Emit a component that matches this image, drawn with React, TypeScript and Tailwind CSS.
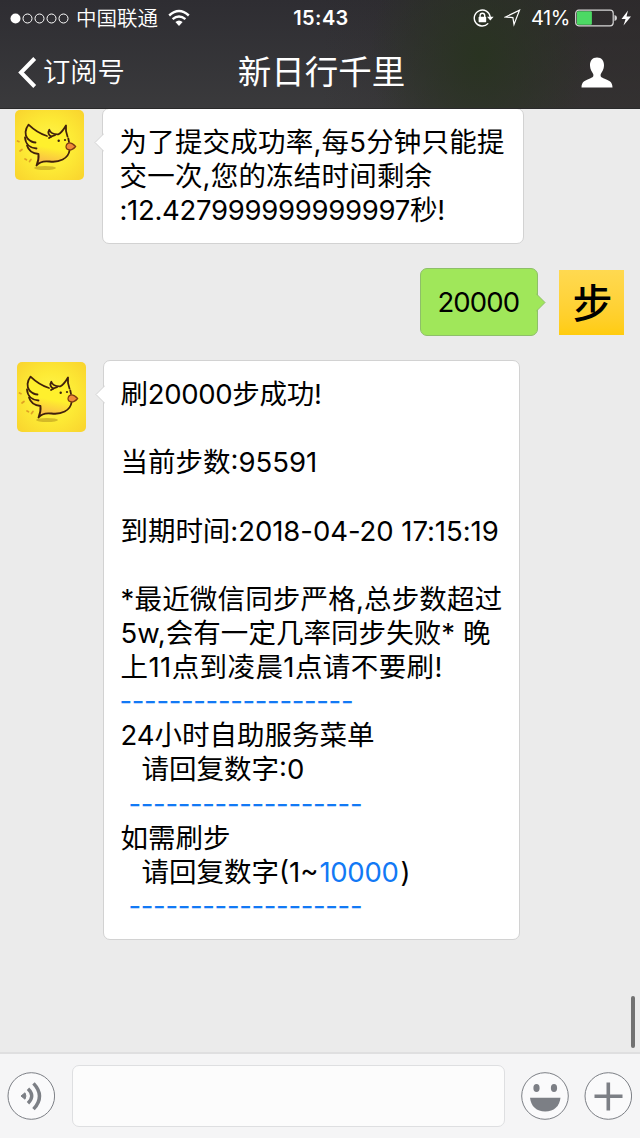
import type { ReactNode } from "react"
import clsx from "clsx"

function StatusBar() {
  return (
    <div className="flex h-9 items-center text-[20px] leading-9">
      <div className="flex w-[213px] items-center">
        <svg className="ml-2.5 h-4 w-[60px]" viewBox="0 0 60 16" fill="none" stroke="white">
          <circle cx="5.5" cy="8.5" r="5" fill="white" stroke="none" />
          <circle cx="17.5" cy="8.5" r="4.5" />
          <circle cx="29.5" cy="8.5" r="4.5" />
          <circle cx="41.5" cy="8.5" r="4.5" />
          <circle cx="53.5" cy="8.5" r="4.5" />
        </svg>
        <span className="ml-1.5 pt-px text-[20.5px] font-[350]">中国联通</span>
        <svg className="ml-2.5 h-[18px] w-[22px]" viewBox="0 0 22 18" fill="none" stroke="white" strokeWidth="2.4">
          <path d="M1.2 6.5 Q11 -2.5 20.8 6.5" />
          <path d="M4.6 10.2 Q11 4.6 17.4 10.2" />
          <path d="M11 17 L7.4 13 Q11 10 14.6 13 Z" fill="white" stroke="none" />
        </svg>
      </div>
      <div className="w-[216px] text-center font-semibold tracking-[0.4px]">15:43</div>
      <div className="flex w-[211px] items-center">
        <svg className="ml-[44px] h-[18px] w-[21px]" viewBox="0 0 21 18" fill="none" stroke="white" strokeWidth="1.4">
          <path d="M15.2 14.4 A8 8 0 1 1 17.2 8" />
          <path d="M14 7.8 H20.6 L17.3 11.6 Z" fill="white" stroke="none" />
          <rect x="5.6" y="7.8" width="7.6" height="5.4" rx="0.6" fill="white" stroke="none" />
          <path d="M7.1 8 V6.5 A2.3 2.3 0 0 1 11.7 6.5 V8" />
        </svg>
        <svg className="ml-2.5 h-[18px] w-[18px]" viewBox="0 0 18 18" fill="none" stroke="white" strokeWidth="1.2">
          <path d="M1.5 8 L15.5 1.2 L10 15.5 L8.9 8.6 Z" />
        </svg>
        <span className="ml-[9px] w-[44px] text-[20px] tracking-[-0.5px]">41%</span>
        <svg className="h-[18px] w-[58px]" viewBox="0 0 58 18">
          <rect x="0.7" y="1.2" width="37.5" height="15.6" rx="3" fill="none" stroke="#d8d8d8" strokeWidth="1.2" />
          <rect x="1.9" y="2.3" width="15" height="13.4" rx="1" fill="#4cd964" />
          <path d="M39.5 6 Q42 6.5 42 9 Q42 11.5 39.5 12 Z" fill="#d8d8d8" />
          <path d="M53 1.5 L46.5 10 H50.6 L48.5 16.5 L56 7.5 H51.5 Z" fill="white" />
        </svg>
      </div>
    </div>
  )
}

function Header() {
  return (
    <header className="h-[109px] shrink-0 border-b border-[#29292a] bg-[radial-gradient(ellipse_110px_130px_at_480px_55px,#293321_0%,#29332100_100%),linear-gradient(90deg,#29242b00_50%,#2d282680_88%),linear-gradient(180deg,#2e2d32,#3a3a3c)] text-white">
      <StatusBar />
      <div className="flex h-[72px] items-center">
        <div className="flex w-[200px] items-center">
          <svg className="ml-[18px] h-[31px] w-[19px]" viewBox="0 0 19 31" fill="none" stroke="white" strokeWidth="4">
            <path d="M16.7 1.5 L3 15.5 L16.7 29.5" />
          </svg>
          <span className="ml-1.5 pt-0.5 text-[27.3px] font-[350]">订阅号</span>
        </div>
        <h1 className="w-[243px] pt-px text-center text-[33.5px] font-normal">新日行千里</h1>
        <div className="flex w-[197px] justify-end">
          <svg className="mr-[27px] h-[31px] w-8" viewBox="0 0 32 31" fill="white">
            <path d="M16 .5 C20.7 .5 23.2 4 23 8.8 C22.9 12.5 21 15 19.8 17 C19.2 19.5 20 20.3 23 21.4 C28 23.3 31.5 24.5 31.5 30.5 H.5 C.5 24.5 4 23.3 9 21.4 C12 20.3 12.8 19.5 12.2 17 C11 15 9.1 12.5 9 8.8 C8.8 4 11.3 .5 16 .5 Z" />
          </svg>
        </div>
      </div>
    </header>
  )
}

function BirdAvatar({ className }: { className?: string }) {
  return (
    <svg className={clsx("h-[70px] w-[69px] shrink-0", className)} viewBox="0 0 69 70" preserveAspectRatio="none">
      <defs>
        <radialGradient id="sun" r="0.7">
          <stop offset="0" stopColor="#fff750" />
          <stop offset="0.5" stopColor="#fdea35" />
          <stop offset="1" stopColor="#f9d32e" />
        </radialGradient>
        <linearGradient id="body" x1="0.6" y1="0" x2="0.4" y2="1">
          <stop offset="0" stopColor="#fff02d" />
          <stop offset="0.55" stopColor="#fff02d" />
          <stop offset="1" stopColor="#f8b24c" />
        </linearGradient>
      </defs>
      <rect width="69" height="70" rx="5" fill="url(#sun)" />
      <ellipse cx="30" cy="58" rx="11" ry="2" fill="#b99a1f" opacity="0.6" />
      <path
        d="M33 26 L14 15 C10 20 9 27 10 30 C11 37 14 42 22 44 L22 55 C27 50 34 52 40 52 C49 51 54 45 54.5 39 L53 34 L52 26 L51 16 L43 24.5 L34 21 Z"
        fill="url(#body)"
      />
      <g fill="none" stroke="#41200c" strokeWidth="1.8" strokeLinecap="round" strokeLinejoin="round">
        <path d="M32 26 C25 24 18 19 13.5 14.7 C10 19 9.5 25 12.5 28.5 C15 31 17.5 32.5 20.5 32.5" />
        <path d="M10 27.5 C10.5 34 15 38 21.5 38.5" />
        <path d="M12 35.5 C13.5 40.5 17.5 43.5 23.5 44 C24 48 23 52 21.5 55.5 C25 51 29 50.8 34.5 51.5 C44 52.8 53.5 48.5 54.5 40.5" />
        <path d="M36.5 26.5 C33.5 25.5 32.5 22.5 34.3 19.8 C35.5 23.5 39.5 24.5 43.5 24.3 C46.5 22.5 49 19 51 15.5 C50.5 19.5 51.2 23.5 52.5 26.5" />
        <path d="M34 28 Q37 26 40 25.2" />
        <path d="M53.3 28.5 L54 32" />
      </g>
      <circle cx="43.7" cy="30.8" r="1.2" fill="#3b2410" />
      <circle cx="50" cy="30" r="1.1" fill="#3b2410" />
      <path
        d="M52.5 33.5 C55.5 31.5 59 34.5 60.5 36.5 C58.5 39.5 55 41 52 39 C50.5 37.5 51 35 52.5 33.5 Z"
        fill="#f08a38"
        stroke="#7c3a12"
        strokeWidth="1.4"
      />
      <g stroke="#dfa025" strokeWidth="1.7" strokeLinecap="round">
        <path d="M2.5 31 L4 31.7" />
        <path d="M5 41 L7 39.5" />
        <path d="M10 49 L11.5 49.8" />
        <path d="M14.5 51.5 L16 49.5" />
      </g>
    </svg>
  )
}

function StepAvatar() {
  return (
    <div className="mt-0.5 flex size-[65px] shrink-0 items-center justify-center bg-linear-to-b from-[#ffd950] to-[#ffcc0d] pt-0.5 pl-0.5 text-[40px] leading-none font-medium">
      步
    </div>
  )
}

function Bubble({ own, className, children }: { own?: boolean; className?: string; children: ReactNode }) {
  return (
    <div
      className={clsx(
        "relative rounded-[7px] border py-4 pl-[16.5px] text-[27.5px] leading-[34.13px] font-[380] whitespace-pre",
        own ? "border-[#8ebf69] bg-[#a0e75a]" : "border-[#d2d2d2] bg-white",
        className,
      )}
    >
      {own ? (
        <svg className="absolute top-6 -right-[9px] h-[19px] w-[10px]" viewBox="0 0 10 19">
          <path d="M0 .5 L9 9.5 L0 18.5" fill="#a0e75a" stroke="#8ebf69" />
        </svg>
      ) : (
        <svg className="absolute top-6 -left-[9px] h-[19px] w-[10px]" viewBox="0 0 10 19">
          <path d="M10 .5 L1 9.5 L10 18.5" fill="white" stroke="#d2d2d2" />
        </svg>
      )}
      {children}
    </div>
  )
}

function Line({ className, children }: { className?: string; children?: ReactNode }) {
  return <div className={clsx("h-[34.13px]", className)}>{children}</div>
}

function Dashes({ className }: { className?: string }) {
  return <Line className={clsx("-ml-px tracking-[-0.35px] text-[#1279f5]", className)}>-------------------</Line>
}

function Chat() {
  return (
    <main className="relative flex flex-1 flex-col overflow-hidden bg-[#ebebeb] text-black">
      <div className="flex h-[159px] items-start pl-[15px]">
        <BirdAvatar className="mt-px" />
        <Bubble className="-mt-px ml-[18px] h-[136px] w-[422px]">
          <Line className="tracking-[0.2px]">为了提交成功率,每5分钟只能提</Line>
          <Line className="tracking-[0.2px]">交一次,您的冻结时间剩余</Line>
          <Line className="tracking-[-0.3px]">:12.427999999999997秒!</Line>
        </Bubble>
      </div>
      <div className="flex h-[92px] items-start justify-end pr-4">
        <Bubble own className="mr-[21px] h-[68px] w-[118px]">
          <Line className="tracking-[-0.9px]">20000</Line>
        </Bubble>
        <StepAvatar />
      </div>
      <div className="flex items-start pl-[17px]">
        <BirdAvatar className="mt-0.5" />
        <Bubble className="ml-[17px] h-[580px] w-[417px]">
          <Line className="tracking-[-0.3px]">刷20000步成功!</Line>
          <Line />
          <Line>当前步数:95591</Line>
          <Line />
          <Line className="tracking-[-0.05px]">到期时间:2018-04-20 17:15:19</Line>
          <Line />
          <Line className="tracking-[0.18px]">*最近微信同步严格,总步数超过</Line>
          <Line className="tracking-[0.05px]">5w,会有一定几率同步失败* 晚</Line>
          <Line className="tracking-[0.42px]">上11点到凌晨1点请不要刷!</Line>
          <Dashes />
          <Line>24小时自助服务菜单</Line>
          <Line className="pl-[21px]">请回复数字:0</Line>
          <Dashes className="pl-[9px]" />
          <Line>如需刷步</Line>
          <Line className="pl-[21px]">
            请回复数字(1~<span className="ml-px mr-0.5 tracking-[-0.3px] text-[#1279f5]">10000</span>)
          </Line>
          <Dashes className="pl-[9px]" />
        </Bubble>
      </div>
      <div className="absolute right-[5px] bottom-1 h-[52px] w-1 rounded-full bg-[#727272]" />
    </main>
  )
}

function InputBar() {
  return (
    <footer className="flex h-[86px] shrink-0 items-center border-t-2 border-[#dfdfe0] bg-[#f5f5f6] pl-[7px] text-[#7c7f85]">
      <svg className="size-12" viewBox="0 0 48 48" fill="none" stroke="currentColor">
        <circle cx="24.3" cy="24" r="23.3" fill="#fafafb" />
        <path d="M14 24 L18 20.8 Q19.8 24 18 27.2 Z" fill="currentColor" />
        <path d="M21 16.8 Q28.5 24 21 31.2" strokeWidth="3.4" />
        <path d="M26.5 11.3 Q38.5 24 26.5 37.2" strokeWidth="3.4" />
      </svg>
      <div className="ml-[17px] h-[62px] w-[433px] rounded-[7px] border border-[#dedfe1] bg-[#fcfcfc]" />
      <svg className="ml-4 size-12" viewBox="0 0 48 48" fill="currentColor">
        <circle cx="24" cy="24" r="23.3" fill="#fafafb" stroke="currentColor" />
        <ellipse cx="15.5" cy="16" rx="3.1" ry="4" />
        <ellipse cx="33" cy="16" rx="3.1" ry="4" />
        <path d="M9 25.8 H39.5 C38.5 34.5 33 39.5 24.2 39.5 C15.5 39.5 10 34.5 9 25.8 Z" />
      </svg>
      <svg className="ml-[15px] size-12" viewBox="0 0 48 48" stroke="currentColor">
        <circle cx="24.3" cy="24" r="23.3" fill="#fafafb" />
        <path d="M24.3 10.5 V38.5 M10.5 24.2 H38.5" strokeWidth="3.6" />
      </svg>
    </footer>
  )
}

export default function App() {
  return (
    <div className="flex h-[1138px] w-[640px] flex-col overflow-hidden font-[Inter,'Noto_Sans_CJK_SC',sans-serif]">
      <Header />
      <Chat />
      <InputBar />
    </div>
  )
}
